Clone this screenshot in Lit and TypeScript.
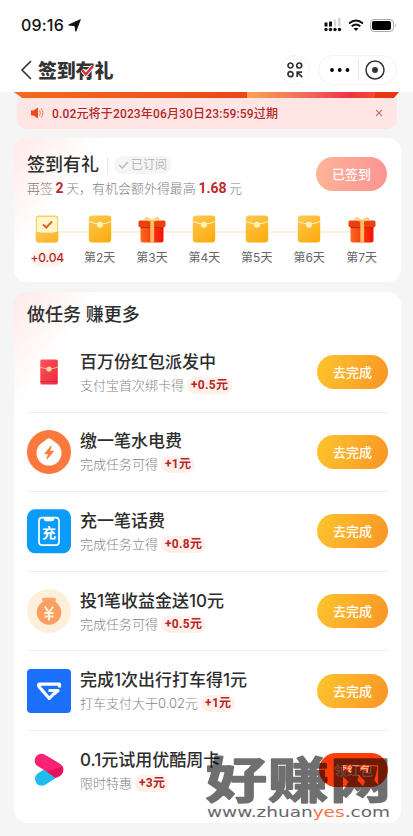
import { LitElement, html, css, svg } from "lit";
import { customElement, property } from "lit/decorators.js";

const envelope = html`<svg width="24" height="28" viewBox="0 0 24 28">
  <defs><linearGradient id="g" x1="0" y1="0" x2=".6" y2="1"><stop offset="0" stop-color="#fcc955"/><stop offset="1" stop-color="#fdae12"/></linearGradient></defs>
  <rect x=".8" y=".5" width="22.4" height="27" rx="3" fill="url(#g)"/>
  <path d="M1 6.500Q6 8.500 12 9.200Q18 8.500 23 6.500" fill="none" stroke="#fff0a8" stroke-width="1.300"/>
  <circle cx="12" cy="9.800" r="3" fill="#fff3bd"/></svg>`;

const opened = html`<svg width="24" height="28" viewBox="0 0 24 28">
  <defs><linearGradient id="o" x1="0" y1="0" x2="1" y2="1"><stop offset="0" stop-color="#ffc85a"/><stop offset="1" stop-color="#fbb01f"/></linearGradient></defs>
  <rect x=".8" y=".5" width="22.4" height="27" rx="3" fill="#f6cf6c"/>
  <rect x="2" y="2" width="20" height="18" rx="2" fill="#fff6c9"/>
  <path d="M.8 16.500Q12 19 23.200 16.500V24.500a3 3 0 0 1-3 3H3.800a3 3 0 0 1-3-3z" fill="url(#o)"/>
  <path d="M8 9.500l3.200 3 5.800-6" fill="none" stroke="#d9682c" stroke-width="2"/></svg>`;

const gift = html`<svg width="28" height="28" viewBox="0 0 28 28">
  <defs><linearGradient id="b" x1="0" y1="0" x2="1" y2="0"><stop offset="0" stop-color="#fb6a1c"/><stop offset="1" stop-color="#f40f08"/></linearGradient></defs>
  <path d="M2.500 10h23v15a2.500 2.500 0 0 1-2.500 2.500H5A2.500 2.500 0 0 1 2.500 25z" fill="url(#b)"/>
  <path d="M2.500 12.500h23" stroke="#c62a05" stroke-width="1.200"/>
  <rect x=".5" y="5.500" width="27" height="6.500" rx="1.500" fill="#e9410f"/>
  <path d="M12.300 6h3.800v21.500h-3.800z" fill="#fdbd62"/>
  <path d="M14 6Q8 6 6.800 3.800Q9 .6 14 6Q19 .6 21.200 3.800Q20 6 14 6z" fill="#ffe09a" stroke="#f6bf55" stroke-width=".9"/></svg>`;

const icons: Record<string, unknown> = {
  packet: svg`<defs><linearGradient id="p" x1="0" y1="0" x2="1" y2="1"><stop offset="0" stop-color="#ff525c"/><stop offset="1" stop-color="#e92b3d"/></linearGradient></defs>
    <rect x="13.300" y="9.500" width="17.500" height="25" rx="1.500" fill="url(#p)"/><path d="M13.300 17Q18 19 22 19T30.800 17" fill="none" stroke="#ffb1a0" stroke-width="1.300"/><circle cx="22" cy="19" r="2.600" fill="#ffd999"/><path d="M13.500 31.500h17" stroke="#c9263b" stroke-width=".8"/>`,
  power: svg`<circle cx="22" cy="22" r="22" fill="#fc783c"/><path d="M22 8.200Q24 8.800 30 13.500A12.500 12.500 0 1 1 14 13.500Q20 8.800 22 8.200z" fill="#fff"/><path d="M24.200 16l-6.600 7.800h3.900l-1.700 5.400 6.900-8h-4z" fill="#fc783c" stroke="#fc783c" stroke-width=".8" stroke-linejoin="round"/>`,
  phone: svg`<rect width="44" height="44" y=".3" rx="8" fill="#0b9bfb"/><rect x="12" y="8.700" width="20" height="27.500" rx="3.200" fill="none" stroke="#fff" stroke-width="1.700"/><path d="M16.500 8.700h11q-.5 3.600-2.500 3.600h-6q-2 0-2.500-3.600z" fill="#fff"/><text x="22" y="28.500" text-anchor="middle" font-size="14" font-weight="700" fill="#fff">充</text>`,
  money: svg`<circle cx="22" cy="22" r="22" fill="#fdf0da"/><rect x="15" y="8.800" width="14" height="3.600" rx="1.500" fill="#fba667"/><circle cx="22" cy="23.400" r="12.300" fill="#f99f5f"/><path d="M17.800 17.500l4.200 6 4.200-6M22 23.500v8M17.500 24h9M17.500 27.500h9" fill="none" stroke="#fff3df" stroke-width="1.900"/>`,
  ride: svg`<rect width="44" height="44" rx="4" fill="#1b70fb"/><path d="M32.500 18.500V15.200H12.200Q10.800 16 12 17.600L22.300 29.500 27 24.500M21.500 21.500H31L27 25" fill="none" stroke="#fff" stroke-width="3.200" stroke-linejoin="round"/>`,
  play: svg`<path d="M14.700 31L24 25" stroke="#1fbcf0" stroke-width="13.400" stroke-linecap="round"/><path d="M14.500 12.500L29.500 21.500" stroke="#fb2173" stroke-width="13.600" stroke-linecap="round"/><path d="M19.500 23.500L35.600 18.500Q37.800 24 32.800 28.200L28.500 30z" fill="#e8115e"/>`,
};

const tasks = [
  ["packet", "百万份红包派发中", "支付宝首次绑卡得", "+0.5元"],
  ["power", "缴一笔水电费", "完成任务可得", "+1元"],
  ["phone", "充一笔话费", "完成任务立得", "+0.8元"],
  ["money", "投1笔收益金送10元", "完成任务可得", "+0.5元"],
  ["ride", "完成1次出行打车得1元", "打车支付大于0.02元", "+1元"],
  ["play", "0.1元试用优酷周卡", "限时特惠", "+3元"],
];

@customElement("task-row")
class TaskRow extends LitElement {
  @property({ attribute: false }) task: string[] = [];
  @property({ type: Boolean }) hot = false;
  static styles = css`
    :host { display: flex; align-items: center; height: 79.600px; border-bottom: 1px solid #efefef; }
    .icon { width: 44px; height: 44px; margin-right: 10px; flex: none; overflow: visible; }
    .copy { flex: 1; white-space: nowrap; margin-left: -1px; margin-right: 1px; padding-top: 1px; }
    .title { font-size: 17px; line-height: 24px; font-weight: 500; color: #2d2d2d; }
    .sub { display: flex; align-items: center; font-size: 13px; line-height: 22px; font-weight: 300; color: #858585; }
    .reward { margin: 1px 0 0 3px; padding: 0 4px; border-radius: 9px; background: #fff1ea; color: #b9262a; font: 700 12px/17px Roboto, "Noto Sans CJK SC", sans-serif; letter-spacing: .3px; }
    .go { width: 71px; height: 34px; line-height: 34px; text-align: center; border-radius: 17px; background: linear-gradient(110deg, #fdc52d, #f99525); color: #fff; font-size: 13px; font-weight: 500; }
    .hot { width: 69px; background: #ff3d0a; color: #ffb199; }
  `;
  render() {
    const [icon, title, sub, reward] = this.task;
    return html`<svg class="icon" viewBox="0 0 44 44">${icons[icon]}</svg>
      <div class="copy"><div class="title">${title}</div>
      <div class="sub">${sub}<span class="reward">${reward}</span></div></div>
      <div class="go ${this.hot ? "hot" : ""}">${this.hot ? "领红包" : "去完成"}</div>`;
  }
}

@customElement("app-root")
class AppRoot extends LitElement {
  static styles = css`
    :host { display: block; position: relative; width: 413px; height: 836px; overflow: hidden; background: #f5f5f5; font-family: Inter, "Noto Sans CJK SC", sans-serif; color: #2d2d2d; }
    * { box-sizing: border-box; }
    svg { display: block; }
    .top { height: 92px; background: #fff; }
    .status { height: 48px; padding: 2px 16px 0 21px; display: flex; align-items: center; }
    .time { font: 500 16px/20px Inter, sans-serif; color: #111; letter-spacing: .2px; margin-right: 4px; }
    .grow { flex: 1; }
    .sys { display: flex; gap: 6px; align-items: center; }
    .nav { height: 44px; padding: 0 16px 0 20px; display: flex; align-items: center; }
    .brand { position: relative; margin: 3px 0 0 6px; font-size: 19px; line-height: 28px; font-weight: 900; color: #333; letter-spacing: -.2px; }
    .tick { position: absolute; left: 43px; top: 6px; }
    .scan { width: 30px; height: 30px; border: 1px solid #f4f4f4; border-radius: 50%; margin-right: 8px; display: grid; place-items: center; }
    .capsule { width: 79px; height: 30px; border: 1px solid #f3f3f3; border-radius: 15px; display: flex; align-items: center; padding: 0 11px 0 11px; justify-content: space-between; }
    .bar { width: 1px; height: 20px; background: #e4e4e4; margin-left: 2px; }
    .strip { display: flex; height: 6px; margin: 0 14px; clip-path: polygon(0 0, 100% 0, 380px 100%, 8px 100%); background: linear-gradient(90deg, #f46a20, #ed4719 60%, #ea3513); }
    .gleam { margin-left: 233px; width: 128px; background: linear-gradient(90deg, #f9a254, #ee655c 50%, #ef3344 80%, #f04b35); }
    .notice { height: 31px; margin: 0 16px 0 17px; padding: 0 14px 1px 14px; border-radius: 0 0 10px 10px; background: #ffe6e5; display: flex; align-items: center; font: 500 12px Roboto, "Noto Sans CJK SC", sans-serif; color: #b3282a; }
    .notice .msg { margin: -1px 0 0 8px; letter-spacing: .16px; white-space: nowrap; }
    .card { margin: 0 12px 0 14px; border-radius: 13px; background: linear-gradient(125deg, #ffe9e8 0, #fff 70px), #fff; }
    .sign { margin-top: 9px; height: 144px; padding-top: 12px; }
    .head { display: flex; align-items: center; padding: 0 14px 0 13px; height: 48px; }
    .h { font-size: 18px; line-height: 28px; font-weight: 500; display: flex; align-items: center; }
    .sep { width: 1px; height: 15px; background: #e5e5e5; margin: 0 6px 0 8px; }
    .sub { height: 18px; padding: 0 5px 0 4px; border-radius: 9px; background: #f5f5f5; color: #b8b8b8; font-size: 12px; font-weight: 400; display: flex; align-items: center; gap: 2px; }
    .desc { margin-top: -1px; font-size: 13px; line-height: 20px; font-weight: 300; color: #808080; white-space: nowrap; word-spacing: -1px; letter-spacing: -.04px; }
    .desc b { font-family: Roboto, sans-serif; font-size: 14px; color: #c0272b; font-weight: 700; }
    .done { width: 71px; height: 34px; line-height: 34px; border-radius: 17px; text-align: center; color: #fff; font-size: 13px; font-weight: 500; background: linear-gradient(100deg, #fdb596, #fd9293); }
    .days { display: grid; grid-template-columns: repeat(7, 52.400px); margin: 17px 0 0 7px; background: linear-gradient(#fdf2d5, #fdf2d5) 26px 16px / 314px 2px no-repeat; }
    .day { display: flex; flex-direction: column; align-items: center; font-size: 12px; line-height: 18px; color: #666; }
    .label { margin-top: 6px; }
    .got { color: #b9262a; font-weight: 500; background: #fff3ec; border-radius: 9px; letter-spacing: -.2px; }
    .tasks { margin-top: 10px; height: 531px; padding: 9px 13px 0; }
    .tasks .h { height: 28px; margin-bottom: 4px; }
    .mark { position: absolute; left: 204px; top: 751px; overflow: visible; }
    task-row:last-child { border-color: transparent; }
  `;
  render() {
    return html`
      <div class="top">
        <div class="status"><span class="time">09:16</span>
          <svg width="13" height="13" viewBox="0 0 13 13"><path d="M12.300.700L7.800 12.300 6.900 6.600.700 6z" fill="#111" stroke="#111" stroke-linejoin="round"/></svg>
          <span class="grow"></span>
          <div class="sys">
            <svg width="18" height="14" viewBox="0 0 18 14"><path d="M.500 4.500h3v4h-3zM5 3.500h3v5H5z" fill="#111"/><path d="M9.700 1.500h2.500v7H9.700zM14 0h2.500v8.500H14z" fill="#d5d5d5"/><g fill="#111"><circle cx="2" cy="11.500" r="1.700"/><circle cx="6.500" cy="11.500" r="1.700"/><circle cx="11" cy="11.500" r="1.700"/><circle cx="15.500" cy="11.500" r="1.700"/></g></svg>
            <svg width="16" height="13" viewBox="0 0 16 13" fill="none" stroke="#111" stroke-width="2"><path d="M1 4.500Q8-1.500 15 4.500M3.700 7.300Q8 3.700 12.300 7.300"/><path d="M8 12L5.500 9.500Q8 7.800 10.500 9.500z" fill="#111" stroke="none"/></svg>
            <svg width="27" height="13" viewBox="0 0 27 13"><rect x=".5" y=".5" width="23" height="12" rx="3.600" fill="none" stroke="#aaa"/><rect x="2" y="2" width="19" height="9" rx="2" fill="#000"/><path d="M25 4.500q1.500 2 0 4z" fill="#aaa"/></svg>
          </div>
        </div>
        <div class="nav">
          <svg width="12" height="20" viewBox="0 0 12 20"><path d="M11 1L2 10l9 9" fill="none" stroke="#333" stroke-width="1.600"/></svg>
          <div class="brand">签到有礼<svg class="tick" width="13" height="13" viewBox="0 0 12 12"><path d="M1 5.500l3.500 4L11 2" fill="none" stroke="#fff" stroke-width="4"/><path d="M1 5.500l3.500 4L11 2" fill="none" stroke="#dc2f38" stroke-width="2.300"/></svg></div>
          <span class="grow"></span>
          <div class="scan"><svg width="16" height="16" viewBox="0 0 16 16" fill="none" stroke="#333" stroke-width="1.700"><circle cx="3.500" cy="3.500" r="2.500"/><circle cx="12.200" cy="3.500" r="2.500"/><circle cx="3.500" cy="12.200" r="2.500"/><path d="M10.200 15V10.200H15M10.500 10.500l4.700 4.700"/></svg></div>
          <div class="capsule"><svg width="20" height="4" viewBox="0 0 20 4"><circle cx="2" cy="2" r="1.900"/><circle cx="9.700" cy="2" r="1.900"/><circle cx="17.500" cy="2" r="1.900"/></svg><span class="bar"></span>
            <svg width="20" height="20" viewBox="0 0 20 20"><circle cx="10" cy="10" r="9" fill="none" stroke="#333" stroke-width="1.500"/><circle cx="10" cy="10" r="3" fill="#333"/></svg></div>
        </div>
      </div>
      <div class="strip"><div class="gleam"></div></div>
      <div class="notice">
        <svg width="13" height="12" viewBox="0 0 13 12"><path d="M0 3.500h2.500L7 .5v11L2.500 8.500H0z" fill="#ed4718"/><path d="M8.500 3.500q1.800 2.500 0 5M10.200 1.500q3.500 4.500 0 9" fill="none" stroke="#f47651"/></svg>
        <span class="msg">0.02元将于2023年06月30日23:59:59过期</span><span class="grow"></span>
        <svg width="8" height="8" viewBox="0 0 8 8"><path d="M1 1l6 6M7 1L1 7" stroke="#c47470" stroke-width="1.100"/></svg>
      </div>
      <section class="card sign">
        <div class="head"><div>
          <div class="h">签到有礼<span class="sep"></span><span class="sub"><svg width="11" height="8" viewBox="0 0 11 8"><path d="M1 4l3.200 3L10 1" fill="none" stroke="#bbb" stroke-width="1.400"/></svg>已订阅</span></div>
          <div class="desc">再签 <b>2</b> 天，有机会额外得最高 <b>1.68</b> 元</div></div>
          <span class="grow"></span><div class="done">已签到</div></div>
        <div class="days">${[1, 2, 3, 4, 5, 6, 7].map((d) => html`<div class="day">${d === 1 ? opened : d === 3 || d === 7 ? gift : envelope}<span class="label ${d === 1 ? "got" : ""}">${d === 1 ? "+0.04" : `第${d}天`}</span></div>`)}</div>
      </section>
      <section class="card tasks"><div class="h">做任务 赚更多</div>
        <div>${tasks.map((t, i) => html`<task-row .task=${t} ?hot=${i === 5}></task-row>`)}</div>
      </section>
      <svg class="mark" width="190" height="72" viewBox="0 0 190 72">
        <text transform="translate(2 47) scale(1 .8)" font-size="61" font-weight="700" textLength="185" fill="#000" stroke="#000" stroke-width="2" stroke-linejoin="round" opacity=".56">好赚网</text>
        <text x="3" y="66" font-family="DejaVu Sans" font-size="14" textLength="183" lengthAdjust="spacingAndGlyphs" fill="#666">www.zhuan<tspan fill="#ff704d">yes</tspan>.com</text>
      </svg>`;
  }
}
